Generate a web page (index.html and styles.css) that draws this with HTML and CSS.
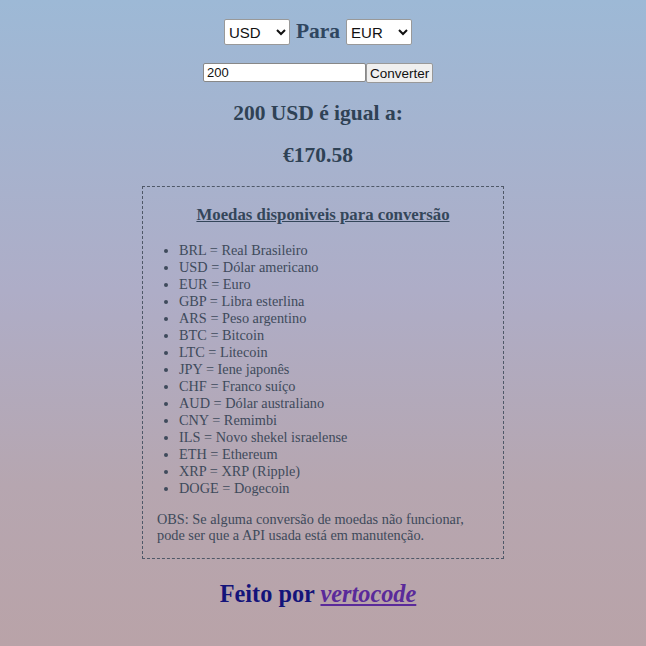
FILE: index.html
```html
<!DOCTYPE html>
<html lang="pt">
<head>
<meta charset="utf-8">
<link rel="stylesheet" href="styles.css">
</head>
<body>
<main class="page">
  <div class="pair">
    <select class="cur"><option>USD</option></select>
    <span class="para">Para</span>
    <select class="cur"><option>EUR</option></select>
  </div>
  <form class="conv">
    <input class="amount" type="text" value="200"><button class="btn" type="button">Converter</button>
  </form>
  <h2 class="result">200 USD é igual a:</h2>
  <h2 class="value">€170.58</h2>
  <section class="box">
    <h3 class="box-title">Moedas disponiveis para conversão</h3>
    <ul class="list">
      <li>BRL = Real Brasileiro</li>
      <li>USD = Dólar americano</li>
      <li>EUR = Euro</li>
      <li>GBP = Libra esterlina</li>
      <li>ARS = Peso argentino</li>
      <li>BTC = Bitcoin</li>
      <li>LTC = Litecoin</li>
      <li>JPY = Iene japonês</li>
      <li>CHF = Franco suíço</li>
      <li>AUD = Dólar australiano</li>
      <li>CNY = Remimbi</li>
      <li>ILS = Novo shekel israelense</li>
      <li>ETH = Ethereum</li>
      <li>XRP = XRP (Ripple)</li>
      <li>DOGE = Dogecoin</li>
    </ul>
    <p class="obs">OBS: Se alguma conversão de moedas não funcionar, pode ser que a API usada está em manutenção.</p>
  </section>
  <h2 class="credit">Feito por <a class="link" href="#">vertocode</a></h2>
</main>
</body>
</html>
```
FILE: styles.css
```css
html, body {
  margin: 0;
  padding: 0;
}
body {
  min-height: 100vh;
  background: linear-gradient(180deg, #9db9d6 0%, #aeadc7 45%, #b6a6b0 75%, #b9a3a8 100%);
  font-family: "Liberation Serif", "Times New Roman", serif;
  color: #3e4a5b;
}
.page {
  display: flex;
  flex-direction: column;
  align-items: center;
  padding-top: 19px;
  padding-right: 10px;
}
.pair {
  display: flex;
  align-items: center;
  gap: 6px;
  height: 26px;
}
.cur {
  width: 66px;
  height: 26px;
  font-family: "Liberation Sans", Arial, sans-serif;
  font-size: 15px;
  color: #111;
  background: #fff;
  border: 1px solid #999;
  border-radius: 2px;
}
.para {
  font-size: 21.5px;
  font-weight: bold;
  color: #2f4660;
  line-height: 26px;
  margin-top: -3px;
}
.conv {
  display: flex;
  margin: 18px 0 0;
}
.amount {
  width: 163px;
  height: 19px;
  box-sizing: border-box;
  font-family: "Liberation Sans", Arial, sans-serif;
  font-size: 13px;
  padding: 1px 3px;
  border: 1px solid #888;
  border-radius: 2px;
  background: #fff;
  color: #111;
}
.btn {
  width: 67px;
  height: 20px;
  box-sizing: border-box;
  font-family: "Liberation Sans", Arial, sans-serif;
  font-size: 13.5px;
  padding: 0 3px;
  border: 1px solid #999;
  border-radius: 2px;
  background: #efefef;
  color: #111;
}
.result, .value {
  font-size: 21.5px;
  font-weight: bold;
  color: #2f4255;
  margin: 0;
  line-height: 24px;
}
.result { margin-top: 18px; }
.value { margin-top: 18px; }
.box {
  width: 362px;
  box-sizing: border-box;
  border: 1px dashed #4f5868;
  margin-top: 19px;
  margin-left: 10px;
  padding: 17px 14px 15px 14px;
}
.box-title {
  margin: 0;
  text-align: center;
  font-size: 16.8px;
  font-weight: bold;
  text-decoration: underline;
  color: #34465a;
  line-height: 22px;
}
.list {
  margin: 16px 0 0;
  padding-left: 22px;
  font-size: 14.3px;
  line-height: 17px;
}
.obs {
  margin: 14px 0 0;
  font-size: 14.3px;
  line-height: 16px;
}
.credit {
  margin: 20px 0 0;
  font-size: 24.3px;
  font-weight: bold;
  color: #14147a;
  line-height: 30px;
}
.link {
  color: #5a2a9a;
  font-style: italic;
}
```
